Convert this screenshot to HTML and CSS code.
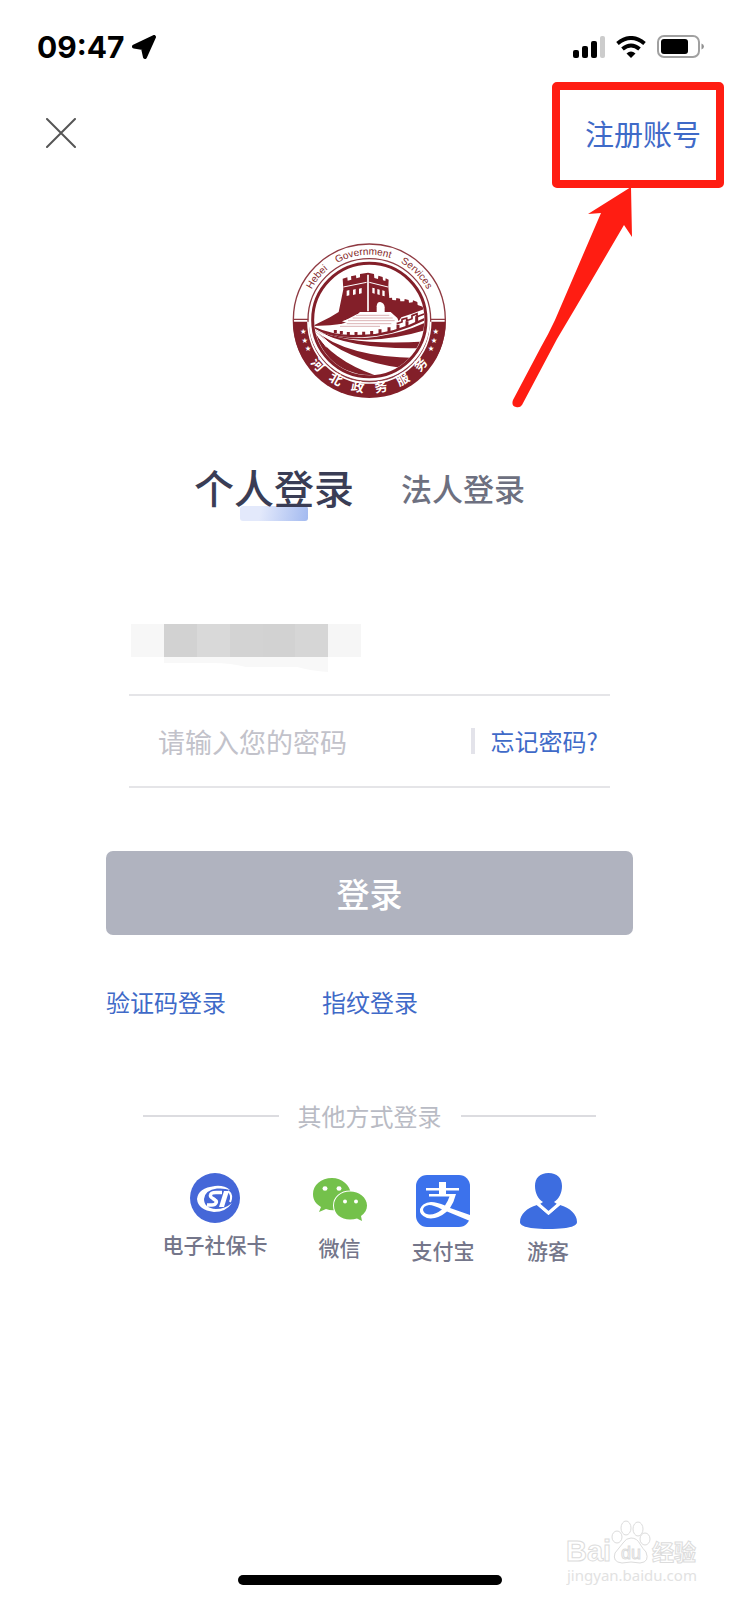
FILE: index.html
```html
<!DOCTYPE html>
<html lang="zh-CN">
<head>
    <meta charset="UTF-8">
    <meta name="viewport" content="width=device-width, initial-scale=1.0">
    <title>个人登录</title>
    <link rel="stylesheet" href="styles.css">
</head>
<body>
    <div class="status-bar">
        <span class="time">09:47</span>
        <svg class="location" width="24" height="24" viewBox="0 0 24 24">
            <path d="M22 2 L13 22 L11 13 L2 11.500 Z" fill="#000" stroke="#000" stroke-width="4" stroke-linejoin="round"/>
        </svg>
        <div class="status-icons">
            <svg width="32" height="22" viewBox="0 0 32 22">
                <rect x="0" y="14" width="6" height="8" rx="2"/>
                <rect x="9" y="10" width="6" height="12" rx="2"/>
                <rect x="18" y="5" width="6" height="17" rx="2"/>
                <rect x="27" y="0" width="5" height="22" rx="2" fill="#ccc"/>
            </svg>
            <svg width="30" height="22" viewBox="0 0 30 22">
                <path d="M1.500 7.500 Q15 -3.500 28.500 7.500" fill="none" stroke="#000" stroke-width="4"/>
                <path d="M6.500 13 Q15 6 23.500 13" fill="none" stroke="#000" stroke-width="4"/>
                <path d="M10.500 17.500 Q15 13.500 19.500 17.500 L15 22 Z"/>
            </svg>
            <svg width="48" height="24" viewBox="0 0 48 24">
                <rect x="1" y="1" width="41" height="21" rx="6" fill="none" stroke="#a0a0a0" stroke-width="2"/>
                <rect x="4" y="4" width="27" height="15" rx="3"/>
                <path d="M44.500 8.500 Q47 9.500 47 11.500 Q47 13.500 44.500 14.500 Z" fill="#909090"/>
            </svg>
        </div>
    </div>

    <header class="nav">
        <button class="close-btn" aria-label="关闭">
            <svg width="30" height="30" viewBox="0 0 30 30">
                <path d="M1 1 L29 29 M29 1 L1 29" stroke="#555" stroke-width="2" stroke-linecap="round"/>
            </svg>
        </button>
        <div class="register">
            <a href="#">注册账号</a>
            <div class="highlight">
                <svg width="130" height="226" viewBox="0 0 130 226">
                    <path d="M127 2 L84 29 L97 28 L51 135 Q44 150 37 162 L9 215 Q7 221 12 222 Q16 223 18 220 L53 154 L72 122 L120 40 L128 52 Z" fill="#ff1d12"/>
                </svg>
            </div>
        </div>
    </header>

    <main>
        <svg class="seal" width="160" height="160" viewBox="30 30 480 480" role="img" aria-label="河北政务服务">
            <defs>
                <path id="arcTop" d="M72 270 A196 196 0 0 1 464 270"/>
                <path id="arcBottom" d="M50 270 A218 218 0 0 0 486 270"/>
                <clipPath id="inner"><circle cx="268" cy="270" r="165"/></clipPath>
            </defs>
            <circle cx="268" cy="270" r="228" fill="#fff" stroke="#8f3a42" stroke-width="4"/>
            <path d="M39 275 H497 A229 229 0 0 1 39 275 Z" fill="#831f29"/>
            <circle cx="268" cy="270" r="184" fill="#fff" stroke="#8f3a42" stroke-width="4"/>
            <path d="M84 275 A184 184 0 0 0 452 275" fill="none" stroke="#fff" stroke-width="5"/>
            <path d="M39 268 H85 M451 268 H497" stroke="#8f3a42" stroke-width="4"/>
            <circle cx="268" cy="270" r="170" fill="#fff" stroke="#831f29" stroke-width="9"/>
            <g clip-path="url(#inner)">
                <!-- hill and tower -->
                <path d="M98 288 L150 262 L176 246 L190 178 L188 146 L202 142 L203 152 L214 149 L213 139 L228 136 L229 145 L240 142 L240 132 L264 128 L282 132 L283 144 L294 147 L295 137 L308 141 L309 151 L316 153 L317 145 L326 149 L325 170 L328 204 L336 203 L337 210 L348 211 L349 204 L360 206 L361 214 L373 214 L374 207 L386 210 L387 218 L398 217 L399 211 L412 216 L413 225 L440 234 L400 250 L364 262 L356 274 L352 264 L332 246 L240 246 L222 262 L186 274 L202 280 L150 286 Z" fill="#831f29"/>
                <path d="M264 134 V244" stroke="#fff" stroke-width="5"/>
                <path d="M190 171 L260 157 M268 157 L324 171" stroke="#fff" stroke-width="3"/>
                <path d="M200 182 l8 -2 v16 l-8 2 Z M219 179 l8 -2 v16 l-8 2 Z M237 176 l8 -2 v16 l-8 2 Z M277 173 l7 2 v16 l-7 -2 Z M292 177 l7 2 v16 l-7 -2 Z M307 181 l7 2 v16 l-7 -2 Z" fill="#fff"/>
                <path d="M290 246 V229 Q291 215 301 216 Q313 219 314 232 V246 Z" fill="#fff"/>
                <!-- steps up to the gate -->
                <path d="M232 252 H330 L352 268 L344 280 L220 300 L130 298 L202 277 L192 273 Z" fill="#fff"/>
                <path d="M228 256 H328 M218 264 H338 M204 272 H344 M200 281 H334 M180 289 H300" stroke="#c98c90" stroke-width="2"/>
                <!-- battlement of the near wall -->
                <path d="M98 292 Q160 322 245 318 Q340 315 436 266" fill="none" stroke="#831f29" stroke-width="7"/>
                <path d="M166 309 v-9 M184 313 v-10 M205 316 v-10 M228 317 v-11 M251 317 v-12 M275 316 v-13 M300 312 v-14 M327 306 v-14 M354 299 v-15 M381 290 v-16 M410 277 v-18" stroke="#831f29" stroke-width="9"/>
                <path d="M350 281 l16 -5 v-8 l14 -4 v8 l16 -6 v-9 l15 -6 v9 l28 -11" fill="none" stroke="#831f29" stroke-width="5"/>
                <!-- sweeping bands -->
                <path d="M98 294 Q190 335 290 320 Q370 309 440 276 L440 299 Q350 327 260 329 Q170 331 98 294 Z" fill="#831f29"/>
                <path d="M98 296 Q210 350 440 334 L428 354 Q210 360 98 296 Z" fill="#831f29"/>
                <path d="M98 296 Q195 382 410 384 L372 415 Q190 392 98 296 Z" fill="#831f29"/>
                <path d="M98 296 Q150 390 292 438 L230 444 Q110 410 98 296 Z" fill="#831f29"/>
                <path d="M98 294 L170 333 M98 294 L155 346 M98 296 L140 352" stroke="#fff" stroke-width="3"/>
            </g>
            <text class="seal-en"><textPath href="#arcTop" startOffset="50%" text-anchor="middle">Hebei&#160;&#160;&#160;&#160;Government&#160;&#160;&#160;&#160;Services</textPath></text>
            <text class="seal-cn"><textPath href="#arcBottom" startOffset="50%" text-anchor="middle">河&#160;&#160;&#160;&#160;北&#160;&#160;&#160;&#160;政&#160;&#160;&#160;&#160;务&#160;&#160;&#160;&#160;服&#160;&#160;&#160;&#160;务</textPath></text>
            <g class="seal-star">
                <text x="70" y="312">★</text>
                <text x="74" y="338">★</text>
                <text x="84" y="362">★</text>
                <text x="467" y="312">★</text>
                <text x="462" y="338">★</text>
                <text x="453" y="362">★</text>
            </g>
        </svg>

        <nav class="tabs">
            <a class="tab active" href="#">个人登录</a>
            <a class="tab" href="#">法人登录</a>
        </nav>

        <form class="login-form">
            <div class="field">
                <input type="text" aria-label="账号">
                <!-- hidden account number -->
                <svg class="mosaic" width="230" height="48" viewBox="0 0 230 48">
                    <rect width="33" height="33" fill="#f7f7f7"/>
                    <rect x="33" width="33" height="33" fill="#d2d2d2"/>
                    <rect x="66" width="33" height="33" fill="#d9d9d9"/>
                    <rect x="99" width="33" height="33" fill="#d3d3d3"/>
                    <rect x="132" width="32" height="33" fill="#d2d2d2"/>
                    <rect x="164" width="33" height="33" fill="#d6d6d6"/>
                    <rect x="197" width="33" height="33" fill="#f6f6f6"/>
                    <path d="M33 33 H197 V48 Q180 47 166 43 L115 43 Q100 39 82 39 H33 Z" fill="#f8f8f8"/>
                </svg>
            </div>
            <div class="field">
                <input type="password" placeholder="请输入您的密码" aria-label="密码">
                <a class="forgot" href="#">忘记密码?</a>
            </div>
            <button type="button" class="login-btn">登录</button>
            <div class="login-links">
                <a href="#">验证码登录</a>
                <a href="#">指纹登录</a>
            </div>
        </form>

        <div class="other-title">其他方式登录</div>
        <div class="other-list">
            <a class="other-item" href="#">
                <svg width="50" height="50" viewBox="0 0 50 50">
                    <circle cx="25" cy="25" r="25" fill="#4567d8"/>
                    <path fill-rule="evenodd" d="M40 17 Q34 12 25 13 Q8 15 7 26 Q8 37 24 39 Q36 39 42 30 Q35 36 26 36 Q14 35 14 26 Q15 17 27 15.500 Q35 15 40 17 Z" fill="#fff"/>
                    <path d="M32 19.500 H26 Q21 19.500 20.500 22 Q20 24 23 25.500 L25 27 Q27 28 26 30 Q25 32 22 32 H17" fill="none" stroke="#fff" stroke-width="3.500"/>
                    <path d="M34 18 H39 L34 34 H29 Z" fill="#fff"/>
                    <path d="M38 18 Q43 22 40 29" fill="none" stroke="#fff" stroke-width="2"/>
                </svg>
                <span>电子社保卡</span>
            </a>
            <a class="other-item" href="#">
                <svg width="54" height="53" viewBox="0 0 54 53">
                    <path d="M19 5 C8 5 0 12 0 21 C0 27 3 31 8 34 L6 39 L13 36 Q18 38 24 37 L38 21 C37 12 29 5 19 5 Z" fill="#74c14b"/>
                    <path d="M37 18.500 C28 18.500 21 24.500 21 32.500 C21 41 28 46.500 37 46.500 Q41 46.500 44 45.500 L49 48 L48 43 C52 40 54 37 54 32.500 C54 24.500 46 18.500 37 18.500 Z" fill="#74c14b" stroke="#fff" stroke-width="2" paint-order="stroke"/>
                    <ellipse cx="12" cy="15.500" rx="2.500" ry="2.300" fill="#fff"/>
                    <ellipse cx="26" cy="15.500" rx="2.500" ry="2.300" fill="#fff"/>
                    <circle cx="32" cy="28.500" r="2" fill="#fff"/>
                    <circle cx="43" cy="28.500" r="2" fill="#fff"/>
                </svg>
                <span>微信</span>
            </a>
            <a class="other-item" href="#">
                <svg width="54" height="56" viewBox="0 0 54 56">
                    <rect x="0" y="2" width="54" height="52" rx="11" fill="#3c72ec"/>
                    <path d="M23 9 H30 V15 H43 V17.500 H30 V21 H40 Q38 29 34 35 L54 42 V48 L31 38.500 Q21 47 11 45 Q3 42 4 36 Q6 30 15 29 Q21 29 29 32.500 Q32 28 33.500 23.500 H13 V21 H23 V17.500 H10 V15 H23 Z M26 36.500 Q18 32 13 32 Q7 33 7 37 Q8 41 13 41.500 Q19 42 26 36.500 Z" fill="#fff" fill-rule="evenodd"/>
                </svg>
                <span>支付宝</span>
            </a>
            <a class="other-item" href="#">
                <svg width="57" height="56" viewBox="0 0 57 56">
                    <path d="M28.500 0 C20 0 15 5 15 13 C15 20 18 26 23 29 L20 31 L28.500 40 L37 31 L34 29 C39 26 42 20 42 13 C42 5 37 0 28.500 0 Z" fill="#3d6de0"/>
                    <path d="M17 32 C7 35 0 41 0 49 C0 52 4 56 28.500 56 C53 56 57 52 57 49 C57 41 50 35 40 32 L28.500 42 Z" fill="#3d6de0"/>
                    <path d="M17.500 30.500 L28.500 40 L39.500 30.500" fill="none" stroke="#fff" stroke-width="3"/>
                </svg>
                <span>游客</span>
            </a>
        </div>
    </main>

    <div class="home-indicator"></div>

    <svg class="watermark" width="138" height="68" viewBox="0 0 138 68">
        <g fill="#fff" stroke="#dcdcdc" stroke-width="1">
            <text class="wm-brand" x="0" y="41">Bai</text>
            <ellipse cx="51" cy="17" rx="5" ry="6"/>
            <ellipse cx="60" cy="8" rx="5" ry="7"/>
            <ellipse cx="72" cy="9" rx="5" ry="7"/>
            <ellipse cx="79" cy="19" rx="5" ry="6"/>
            <path d="M65 18 Q71 18 74 24 Q77 29 80 32 Q84 42 74 43 Q65 41 56 43 Q46 42 49 33 Q53 28 57 23 Q60 18 65 18 Z"/>
            <text class="wm-du" x="55" y="39">du</text>
            <text class="wm-cn" x="86" y="40">经验</text>
        </g>
        <text class="wm-url" x="1" y="61">jingyan.baidu.com</text>
    </svg>
</body>
</html>
```

FILE: styles.css
```css
* {
    box-sizing: border-box;
}
body {
    display: flex;
    flex-direction: column;
    min-height: 100vh;
    margin: 0;
    position: relative;
    background-color: #fff;
    color: #3a3d55;
    font-family: "Noto Sans CJK SC", sans-serif;
}
a {
    color: #3f6ac8;
    text-decoration: none;
}
button,
input {
    font-family: inherit;
    border: none;
    background: none;
    padding: 0;
}
svg {
    display: block;
}
.status-bar {
    display: flex;
    align-items: center;
    height: 36px;
    margin-top: 29px;
    padding: 0 34px 0 37px;
}
.time {
    font-family: Inter, sans-serif;
    font-size: 30px;
    font-weight: 700;
    color: #000;
}
.location {
    margin-left: 8px;
}
.status-icons {
    display: flex;
    align-items: center;
    gap: 11px;
    margin-left: auto;
}
.nav {
    display: flex;
    align-items: center;
    justify-content: space-between;
    height: 58px;
    margin-top: 39px;
    padding: 0 38px 0 46px;
}
.close-btn {
    cursor: pointer;
}
.register {
    position: relative;
    font-size: 29px;
    line-height: 40px;
}
/* red marker round the register link */
.highlight {
    position: absolute;
    top: -31px;
    right: -23px;
    width: 172px;
    height: 106px;
    border: 8px solid #ff1d12;
    border-radius: 5px;
    pointer-events: none;
}
.highlight svg {
    position: absolute;
    top: 95px;
    right: 82px;
}
.seal {
    margin: 78px auto 0;
}
.seal-en {
    font-family: "Liberation Sans", sans-serif;
    font-size: 30px;
    fill: #831f29;
}
.seal-cn {
    font-size: 39px;
    font-weight: 700;
    fill: #fff;
}
.seal-star {
    font-family: "DejaVu Sans", sans-serif;
    font-size: 22px;
    text-anchor: middle;
    fill: #fff;
}
.tabs {
    display: flex;
    align-items: center;
    justify-content: center;
    gap: 47px;
    height: 48px;
    margin: 63px 20px 0 0;
}
.tab {
    font-size: 31px;
    color: #6d7080;
    font-weight: 500;
}
.tab.active {
    position: relative;
    z-index: 0;
    font-size: 40px;
    line-height: 48px;
    color: #3a3d55;
}
.tab.active::after {
    content: "";
    position: absolute;
    z-index: -1;
    left: 46px;
    bottom: -10px;
    width: 68px;
    height: 15px;
    border-radius: 3px;
    background: linear-gradient(100deg, #e3e9fb 30%, #a3baf0);
}
.login-form {
    margin: 93px 106px 0;
}
.field {
    display: flex;
    align-items: center;
    position: relative;
    height: 92px;
    margin: 0 23px;
    padding: 0 12px 0 29px;
    border-bottom: 2px solid #e5e5e8;
}
.field input {
    flex: 1;
    min-width: 0;
    height: 40px;
    font-size: 27px;
    outline: none;
}
.field input::placeholder {
    color: #c2c2ca;
    opacity: 1;
}
.mosaic {
    position: absolute;
    left: 2px;
    top: 20px;
}
.forgot {
    padding-left: 16px;
    border-left: 4px solid #e3e3ea;
    font-size: 24px;
    line-height: 26px;
}
.login-btn {
    display: block;
    width: 100%;
    height: 84px;
    margin-top: 63px;
    border-radius: 7px;
    background-color: #b0b3bf;
    color: #fff;
    font-size: 33px;
    font-weight: 500;
    cursor: pointer;
}
.login-links {
    display: flex;
    gap: 96px;
    margin-top: 52px;
    font-size: 24px;
    line-height: 30px;
}
.other-title {
    display: flex;
    align-items: center;
    gap: 19px;
    margin: 84px 143px 0;
    font-size: 24px;
    line-height: 30px;
    color: #b9bbc4;
}
.other-title::before,
.other-title::after {
    content: "";
    flex: 1;
    height: 2px;
    background-color: #dcdce0;
}
.other-list {
    display: flex;
    justify-content: center;
    gap: 45px;
    margin-top: 42px;
}
.other-item {
    display: flex;
    flex-direction: column;
    align-items: center;
    gap: 9px;
    font-size: 21px;
    font-weight: 500;
    line-height: 24px;
    color: #74768a;
}
.home-indicator {
    width: 264px;
    height: 10px;
    margin: auto auto 15px;
    border-radius: 5px;
    background-color: #000;
}
.watermark {
    position: absolute;
    right: 35px;
    bottom: 12px;
}
.wm-brand {
    font-family: "Liberation Sans", sans-serif;
    font-size: 29px;
    font-weight: 700;
}
.wm-du {
    font-family: "Liberation Sans", sans-serif;
    font-size: 18px;
}
.wm-cn {
    font-size: 22px;
    font-weight: 700;
}
.wm-url {
    font-family: "Noto Sans", sans-serif;
    font-size: 15px;
    fill: #e2e2e2;
}
```
